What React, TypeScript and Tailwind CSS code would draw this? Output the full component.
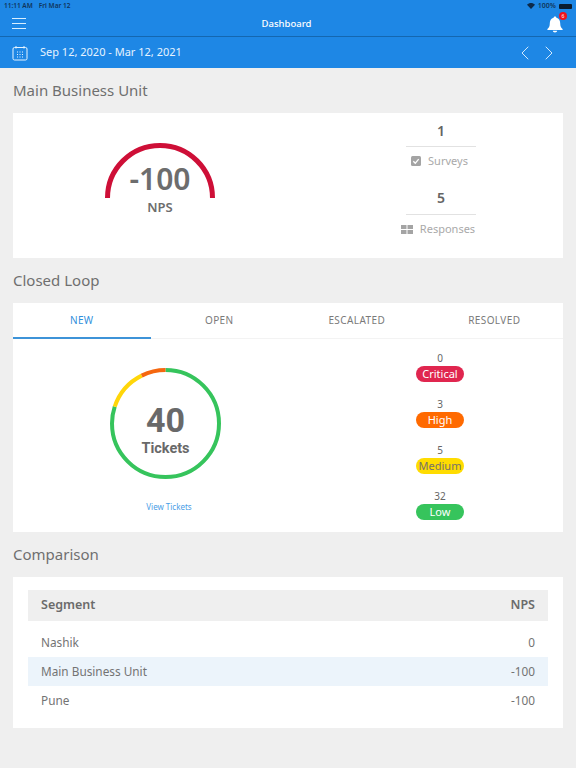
import React from 'react';
import { ChevronLeft, ChevronRight } from 'lucide-react';

const FONT = { fontFamily: '"Noto Sans", "Open Sans", sans-serif' };

const SEVERITIES = [
  { count: 0, label: 'Critical', cls: 'bg-[#e0264f] text-white' },
  { count: 3, label: 'High', cls: 'bg-[#ff6a00] text-white' },
  { count: 5, label: 'Medium', cls: 'bg-[#ffdc00] text-[#77716a]' },
  { count: 32, label: 'Low', cls: 'bg-[#36c45c] text-white' },
];

const ROWS = [
  { name: 'Nashik', nps: '0', active: false },
  { name: 'Main Business Unit', nps: '-100', active: true },
  { name: 'Pune', nps: '-100', active: false },
];

function CalendarIcon() {
  return (
    <svg width="16" height="16" viewBox="0 0 16 16" fill="none" stroke="#e6f4ff" strokeWidth="1">
      <rect x="1" y="2.5" width="14" height="12.5" rx="1.5" />
      <path d="M4 1v2.5M12 1v2.5" />
      <path d="M5 7h1M7.5 7h1M10 7h1M5 9.5h1M7.5 9.5h1M10 9.5h1M5 12h1M7.5 12h1M10 12h1" strokeWidth="1.2" />
    </svg>
  );
}

function Bell() {
  return (
    <div className="relative w-[16px] h-[17px] mt-[1px]">
      <svg width="16" height="17" viewBox="0 0 16 17" fill="white">
        <path d="M8 0.5c.8 0 1.3.5 1.4 1.2C12 2.4 13.2 4.6 13.2 7.2c0 3 .8 4.4 2.4 5.8v1H.4v-1C2 11.6 2.8 10.2 2.8 7.2c0-2.6 1.2-4.8 3.8-5.5C6.7 1 7.2.5 8 .5z" />
        <path d="M5.8 14.8h4.4c-.2 1-1 1.7-2.2 1.7s-2-.7-2.2-1.7z" />
      </svg>
      <div className="absolute -top-[4px] -right-[4px] w-[8px] h-[8px] rounded-full bg-[#f0141e] text-white text-[5px] leading-[8px] text-center">6</div>
    </div>
  );
}

function StatusBar() {
  return (
    <div className="h-[11px] pt-[1px] flex items-center justify-between pl-[4px] pr-[4px] text-[6.5px] font-semibold text-[#10355c]">
      <div className="flex gap-[6px]">
        <span>11:11 AM</span>
        <span>Fri Mar 12</span>
      </div>
      <div className="flex items-center gap-[3px]">
        <svg width="8" height="6" viewBox="0 0 16 12" fill="#0d2a4a">
          <path d="M8 12L0 3.5C4.5-1 11.5-1 16 3.5z" />
        </svg>
        <span className="text-[7px]">100%</span>
        <div className="w-[13px] h-[5px] rounded-[1px] bg-[#0a1c30]" />
      </div>
    </div>
  );
}

function Gauge() {
  return (
    <div className="relative w-[112px] h-[80px] flex flex-col items-center pt-[23px]">
      <svg className="absolute top-0 left-0" width="112" height="57" viewBox="0 0 112 57" fill="none">
        <path d="M3.5 56 A52.5 52.5 0 0 1 108.5 56" stroke="#ce0f37" strokeWidth="5" />
      </svg>
      <div className="text-[30px] leading-[28px] font-semibold text-[#6d6d6d]">-100</div>
      <div className="text-[13px] leading-[14px] mt-[7px] font-semibold text-[#6d6d6d]">NPS</div>
    </div>
  );
}

function Ring() {
  const r = 53.5;
  const c = 2 * Math.PI * r;
  return (
    <div className="relative w-[111px] h-[111px] flex flex-col items-center pt-[36px] font-['Roboto',sans-serif]">
      <svg className="absolute inset-0 -rotate-90" width="111" height="111" viewBox="0 0 111 111" fill="none">
        <circle cx="55.5" cy="55.5" r={r} stroke="#36c45c" strokeWidth="4" strokeDasharray={`${c * 0.8} ${c}`} />
        <circle cx="55.5" cy="55.5" r={r} stroke="#ffd60a" strokeWidth="4" strokeDasharray={`${c * 0.125} ${c}`} strokeDashoffset={-c * 0.8} />
        <circle cx="55.5" cy="55.5" r={r} stroke="#f5670f" strokeWidth="4" strokeDasharray={`${c * 0.075} ${c}`} strokeDashoffset={-c * 0.925} />
      </svg>
      <div className="text-[34px] leading-[32px] font-bold text-[#696969]">40</div>
      <div className="text-[14.5px] leading-[18px] font-bold text-[#696969] mt-[4px]">Tickets</div>
    </div>
  );
}

export default function App() {
  return (
    <div style={FONT} className="w-[576px] h-[768px] bg-[#efefef] overflow-hidden flex flex-col">
      <div className="bg-[#1e87e5] text-white">
        <StatusBar />
        <div className="h-[26px] flex items-center justify-between pl-[12px] pr-[13px] border-b border-[#1467b0]">
          <div className="w-[14px] flex flex-col gap-[3.5px]">
            <div className="h-[1.5px] bg-[#d9efff]" />
            <div className="h-[1.5px] bg-[#d9efff]" />
            <div className="h-[1.5px] bg-[#d9efff]" />
          </div>
          <div className="text-[9.5px] font-medium mt-[2px]">Dashboard</div>
          <Bell />
        </div>
        <div className="h-[31px] flex items-center pl-[12px] pr-[15px]">
          <CalendarIcon />
          <div className="ml-[12px] text-[11px] text-[#e6f3ff] flex-1">Sep 12, 2020 - Mar 12, 2021</div>
          <ChevronLeft size={24} strokeWidth={0.9} className="text-[#e6f4ff]" />
          <ChevronRight size={24} strokeWidth={0.9} className="text-[#e6f4ff]" />
        </div>
      </div>

      <div className="px-[13px] flex flex-col">
        <h2 className="mt-[11px] h-[23px] text-[15px] leading-[22px] text-[#6f6f6f]">Main Business Unit</h2>
        <div className="mt-[11px] h-[145px] bg-white flex">
          <div className="w-[294px] flex justify-center pt-[29px]">
            <Gauge />
          </div>
          <div className="flex-1 pl-[99px] pt-[7px]">
            <div className="w-[70px] flex flex-col items-center">
              <div className="w-full h-[27px] text-[14px] leading-[22px] font-semibold text-[#646464] text-center border-b border-[#e2e2e2]">1</div>
              <div className="mt-[6px] h-[16px] flex items-center justify-center gap-[7px] -ml-[3px] text-[11px] text-[#a9a9a9]">
                <svg width="10" height="10" viewBox="0 0 10 10">
                  <rect width="10" height="10" rx="1.5" fill="#a4a4a4" />
                  <path d="M2.3 5.2l2 2 3.4-4" fill="none" stroke="white" strokeWidth="1.3" />
                </svg>
                Surveys
              </div>
              <div className="mt-[18px] w-full h-[28px] text-[14px] leading-[22px] font-semibold text-[#646464] text-center border-b border-[#e2e2e2]">5</div>
              <div className="mt-[6px] h-[16px] flex items-center justify-center gap-[7px] -ml-[6px] text-[11px] text-[#a9a9a9] whitespace-nowrap">
                <svg width="12" height="9" viewBox="0 0 12 9" fill="#a4a4a4">
                  <rect width="5.5" height="4" />
                  <rect x="6.5" width="5.5" height="4" />
                  <rect y="5" width="5.5" height="4" />
                  <rect x="6.5" y="5" width="5.5" height="4" />
                </svg>
                Responses
              </div>
            </div>
          </div>
        </div>

        <h2 className="mt-[11px] h-[23px] text-[15px] leading-[22px] text-[#6f6f6f]">Closed Loop</h2>
        <div className="mt-[11px] h-[229px] bg-white flex flex-col">
          <div className="h-[36px] grid grid-cols-4 border-b border-[#f3f3f3] text-[10px] text-[#7a7a7a] tracking-[0.4px]">
            <div className="flex items-center justify-center text-[#2f8fdc] border-b-[2px] border-[#3d93d8] -mb-px">NEW</div>
            <div className="flex items-center justify-center">OPEN</div>
            <div className="flex items-center justify-center">ESCALATED</div>
            <div className="flex items-center justify-center">RESOLVED</div>
          </div>
          <div className="flex flex-1">
            <div className="w-[294px] pl-[97px] pt-[29px]">
              <Ring />
              <div className="w-[111px] mt-[22px] pl-[7px] text-center text-[8px] leading-[12px] text-[#4a9ee6]">View Tickets</div>
            </div>
            <div className="flex-1 pl-[109px] pt-[11px] flex flex-col gap-[14px]">
              {SEVERITIES.map((s) => (
                <div key={s.label} className="w-[48px] flex flex-col items-center">
                  <div className="h-[16px] text-[10px] leading-[16px] text-[#666666]">{s.count}</div>
                  <div className={`w-[48px] h-[16px] rounded-full text-center text-[11px] leading-[16px] ${s.cls}`}>{s.label}</div>
                </div>
              ))}
            </div>
          </div>
        </div>

        <h2 className="mt-[11px] h-[23px] text-[15px] leading-[22px] text-[#6f6f6f]">Comparison</h2>
        <div className="mt-[11px] h-[151px] bg-white px-[15px] pt-[13px]">
          <div className="h-[31px] bg-[#efefef] flex items-center justify-between px-[13px] text-[12.5px] font-semibold text-[#6b6b6b]">
            <span>Segment</span>
            <span>NPS</span>
          </div>
          <div className="mt-[7px]">
            {ROWS.map((row) => (
              <div
                key={row.name}
                className={`h-[29px] flex items-center justify-between px-[13px] text-[11.8px] text-[#737373] ${row.active ? 'bg-[#ecf4fb]' : ''}`}
              >
                <span>{row.name}</span>
                <span>{row.nps}</span>
              </div>
            ))}
          </div>
        </div>
      </div>
    </div>
  );
}
